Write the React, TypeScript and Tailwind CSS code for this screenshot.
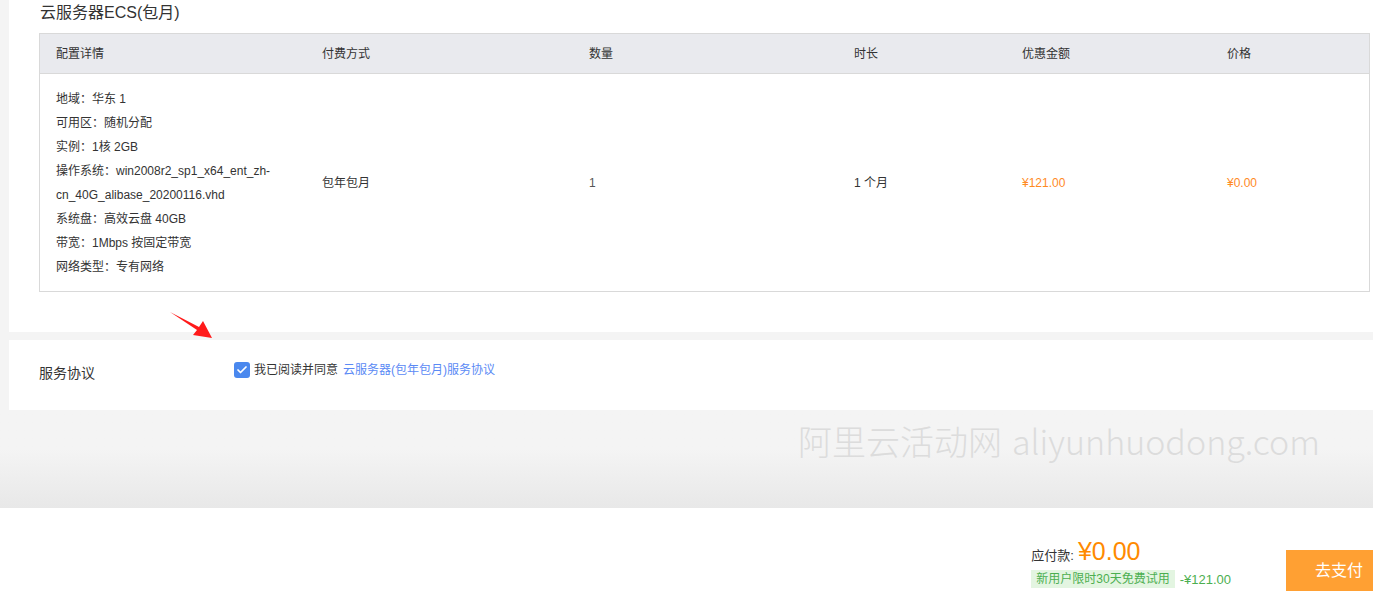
import { Check } from "lucide-react";

const SPECS = [
  "地域：华东 1",
  "可用区：随机分配",
  "实例：1核 2GB",
  "操作系统：win2008r2_sp1_x64_ent_zh-",
  "cn_40G_alibase_20200116.vhd",
  "系统盘：高效云盘 40GB",
  "带宽：1Mbps 按固定带宽",
  "网络类型：专有网络",
];

const HEADS = ["配置详情", "付费方式", "数量", "时长", "优惠金额", "价格"];

export default function App() {
  return (
    <div
      className="relative h-[591px] w-[1373px] overflow-hidden flex flex-col bg-[#f4f4f4] text-[#333]"
      style={{ fontFamily: '"Liberation Sans", "Noto Sans CJK SC", sans-serif' }}
    >
      {/* Order card */}
      <div className="ml-[9px] bg-white pl-[30px] pr-[3px] pb-[40px]">
        <h2 className="h-[26px] leading-[26px] text-[16px] pl-px">云服务器ECS(包月)</h2>
        <div className="mt-[7px] border border-[#d9d9d9]">
          <div className="grid grid-cols-[266px_267px_265px_168px_205px_1fr] h-[40px] items-center bg-[#e9eaee] border-b border-[#d9d9d9] text-[12px]">
            {HEADS.map(h => (
              <div key={h} className="pl-4">{h}</div>
            ))}
          </div>
          <div className="grid grid-cols-[266px_267px_265px_168px_205px_1fr] items-center text-[12px] pt-[13px] pb-[12px]">
            <div className="pl-4">
              {SPECS.map(s => (
                <p key={s} className="leading-[24px]">{s}</p>
              ))}
            </div>
            <div className="pl-4">包年包月</div>
            <div className="pl-4 text-[#555]">1</div>
            <div className="pl-4">1 个月</div>
            <div className="pl-4 text-[#ff8a1f]">¥121.00</div>
            <div className="pl-4 text-[#ff8a1f]">¥0.00</div>
          </div>
        </div>
      </div>

      {/* Agreement card */}
      <div className="mt-[8px] ml-[9px] h-[70px] bg-white pl-[30px] pt-[22px] flex items-start">
        <span className="w-[195px] text-[14px] leading-[20px] mt-[1px]">服务协议</span>
        <label className="flex items-center text-[12px] leading-[16px]">
          <span className="w-[16px] h-[16px] rounded-[3px] bg-[#4a88ee] flex items-center justify-center">
            <Check size={12} strokeWidth={3.5} className="text-white" />
          </span>
          <span className="ml-[4px]">我已阅读并同意</span>
          <span className="ml-[5px] text-[#5b8af5]">云服务器(包年包月)服务协议</span>
        </label>
      </div>

      {/* Watermark band */}
      <div className="h-[98px] bg-gradient-to-b from-[#f4f4f4] from-40% to-[#e8e8e8] flex justify-end pr-[53px] pt-[9px]">
        <span
          className="text-[34px] leading-[44px] font-light text-[#dcdcdc]"
          style={{ fontFamily: '"Noto Sans CJK SC", "Open Sans", sans-serif' }}
        >
          阿里云活动网<span className="ml-[10px]">aliyunhuodong.com</span>
        </span>
      </div>

      {/* Footer */}
      <div className="flex-1 bg-white flex items-end justify-end">
        <div className="mr-[55px] mb-[2px]">
          <div className="flex items-baseline">
            <span className="text-[13px]">应付款:</span>
            <span className="ml-[4px] text-[25px] leading-[32px] text-[#ff8a00]">¥0.00</span>
          </div>
          <div className="flex items-center mt-[3px]">
            <span className="bg-[#e3f5e1] text-[#4caf50] text-[12px] px-[5px] h-[18px] leading-[18px]">新用户限时30天免费试用</span>
            <span className="ml-[5px] text-[13px] text-[#4caf50]">-¥121.00</span>
          </div>
        </div>
        <button className="w-[87px] h-[41px] bg-[#ffa033] text-white text-[16px] text-left pl-[29px]">去支付</button>
      </div>

      {/* Annotation arrow */}
      <svg className="absolute left-[165px] top-[307px]" width="52" height="36" viewBox="0 0 52 36">
        <polygon points="5,5 34,20 38,14 47,31 28,28 32,23" fill="#ff1a1a" />
      </svg>
    </div>
  );
}
